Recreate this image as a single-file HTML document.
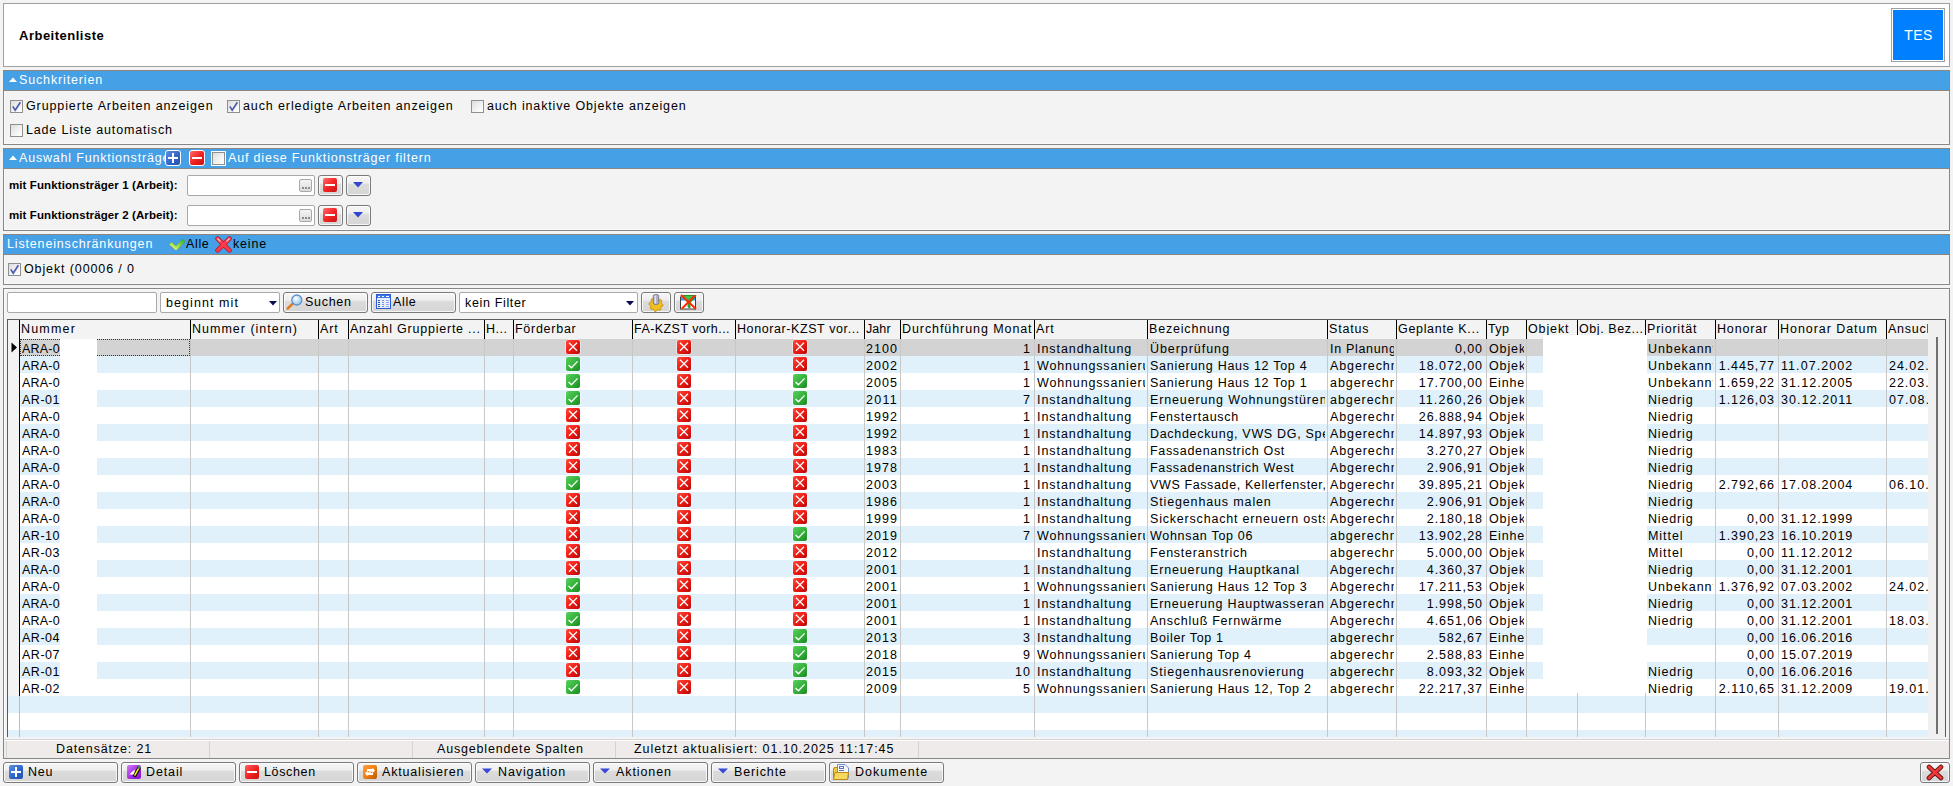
<!DOCTYPE html><html><head><meta charset="utf-8"><style>
*{box-sizing:border-box;margin:0;padding:0}
html,body{width:1953px;height:786px;overflow:hidden;background:#f3f3f3;font-family:"Liberation Sans",sans-serif;font-size:12.5px;letter-spacing:0.9px;color:#000}
.a{position:absolute}
.t{position:absolute;white-space:nowrap;line-height:17px}
.bar{position:absolute;left:3px;width:1947px;height:21px;background:#45a0e6;border-top:1px solid #8c8682;border-bottom:1px solid #8c8682;border-left:1px solid #8c8682;border-right:1px solid #8c8682}
.pnl{position:absolute;left:3px;width:1947px;border:1px solid #878787;border-top:none;box-shadow:inset 1px 0 #fafafa,inset 0 -1px #fafafa}
.bt{color:#fff}
.cb{position:absolute;width:13px;height:13px;border:1px solid #8e8f8f;background:linear-gradient(135deg,#dcdcdc 0%,#f4f4f4 60%,#fff 100%)}
.cb i{position:absolute;left:1px;top:1px;width:9px;height:9px;border:1px solid #fff;border-right:none;border-bottom:none}
.btn{position:absolute;border:1px solid #7a7a7a;border-radius:3px;background:linear-gradient(#f6f6f6 0%,#eeeeee 38%,#dcdcdc 43%,#d6d6d6 90%,#dedede 100%);box-shadow:inset 0 0 0 1px rgba(255,255,255,0.75)}
.inp{position:absolute;background:#fff;border:1px solid #a9a9a9;border-radius:2px}
.gh{position:absolute;top:320px;height:19px;background:#f3f3f3}
.hs{position:absolute;top:320px;width:1px;height:19px;background:#000}
.vs{position:absolute;width:1px;background:#c6c6c6}
.row{position:absolute;left:8px;width:1920px;height:17px}
.c{position:absolute;white-space:nowrap;overflow:hidden;line-height:17px;height:17px;padding-top:2px}
.r{text-align:right}
.ix{position:absolute;width:14px;height:14px;border-radius:2px}
</style></head><body>
<div class="a" style="left:3px;top:3px;width:1947px;height:64px;background:#fff;border:1px solid #a0a0a0"></div>
<div class="t fx" style="left:19px;top:27px;font-weight:bold;font-size:13px;letter-spacing:0.5px">Arbeitenliste</div>
<div class="a" style="left:1891px;top:8px;width:54px;height:54px;border:1px solid #a0a0a0;background:#fff"></div>
<div class="a" style="left:1893px;top:10px;width:50px;height:50px;background:#0080ff"></div>
<div class="t fx" style="left:1893px;top:27px;width:50px;text-align:center;color:#fff;font-size:14px;font-weight:normal;letter-spacing:0.4px;padding-left:1px">TES</div>
<div class="bar" style="top:70px"></div>
<svg class="a" style="left:9px;top:77px" width="8" height="5"><path d="M0 5 L4 0.5 L8 5 Z" fill="#fff"></path></svg>
<div class="t bt" style="left: 19px; top: 72px; letter-spacing: 0.86px;">Suchkriterien</div>
<div class="pnl" style="top:91px;height:54px"></div>
<div class="cb" style="left:10px;top:100px"><svg class="a" style="left:0;top:0" width="11" height="11"><path d="M1.8 5.4 L4.2 9.2 L9.4 1.2" stroke="#4a5cb0" stroke-width="1.7" fill="none"></path></svg></div>
<div class="t" style="left: 26px; top: 98px; letter-spacing: 0.89px;">Gruppierte Arbeiten anzeigen</div>
<div class="cb" style="left:227px;top:100px"><svg class="a" style="left:0;top:0" width="11" height="11"><path d="M1.8 5.4 L4.2 9.2 L9.4 1.2" stroke="#4a5cb0" stroke-width="1.7" fill="none"></path></svg></div>
<div class="t" style="left: 243px; top: 98px; letter-spacing: 0.89px;">auch erledigte Arbeiten anzeigen</div>
<div class="cb" style="left:471px;top:100px"></div>
<div class="t" style="left: 487px; top: 98px; letter-spacing: 0.86px;">auch inaktive Objekte anzeigen</div>
<div class="cb" style="left:10px;top:124px"></div>
<div class="t" style="left: 26px; top: 122px; letter-spacing: 0.83px;">Lade Liste automatisch</div>
<div class="bar" style="top:148px"></div>
<svg class="a" style="left:9px;top:155px" width="8" height="5"><path d="M0 5 L4 0.5 L8 5 Z" fill="#fff"></path></svg>
<div class="a" style="left:19px;top:149px;width:146px;height:19px;overflow:hidden"><div class="t bt" style="left: 0px; top: 1px; letter-spacing: 0.81px;">Auswahl Funktionsträger</div></div>
<div class="a" style="left:165px;top:150px;width:16px;height:16px;border:1px solid #fff;border-radius:3px;background:linear-gradient(135deg,#5b8fe0,#2f63c4 60%,#2553b0)"><div class="a" style="left:2px;top:6px;width:10px;height:2px;background:#fff"></div><div class="a" style="left:6px;top:2px;width:2px;height:10px;background:#fff"></div></div>
<div class="a" style="left:189px;top:150px;width:16px;height:16px;border:1px solid #fff;border-radius:3px;background:linear-gradient(135deg,#ff6a6a,#f02020 55%,#c81010)"><div class="a" style="left:2px;top:6px;width:10px;height:2px;background:#fff"></div></div>
<div class="a" style="left:211px;top:151px;width:15px;height:15px;border:1px solid #fff"><div class="cb" style="left:0;top:0"></div></div>
<div class="t bt" style="left: 228px; top: 150px; letter-spacing: 0.82px;">Auf diese Funktionsträger filtern</div>
<div class="pnl" style="top:169px;height:62px"></div>
<div class="t fx" style="left:9px;top:177px;font-size:11.5px;font-weight:bold;letter-spacing:0.1px">mit Funktionsträger 1 (Arbeit):</div>
<div class="inp" style="left:187px;top:175px;width:128px;height:21px"></div><div class="a" style="left:299px;top:179px;width:13px;height:13px;border:1px solid #a8a8a8;border-radius:2px;background:linear-gradient(#f4f4f4,#dcdcdc)"><div class="a" style="left:2px;top:7px;width:2px;height:2px;background:#8a8a8a"></div><div class="a" style="left:5px;top:7px;width:2px;height:2px;background:#8a8a8a"></div><div class="a" style="left:8px;top:7px;width:2px;height:2px;background:#8a8a8a"></div></div><div class="btn" style="left:318px;top:175px;width:25px;height:21px"><div class="a" style="left:4px;top:2px;width:14px;height:14px;border-radius:2px;background:linear-gradient(135deg,#ff7070,#f52525 50%,#c81414)"><div class="a" style="left:2px;top:6px;width:10px;height:2px;background:#fff"></div></div></div><div class="btn" style="left:346px;top:175px;width:25px;height:21px"><svg class="a" style="left:6px;top:6px" width="10" height="6"><path d="M0 0 L10 0 L5 5.5 Z" fill="#3344cc"></path></svg></div>
<div class="t fx" style="left:9px;top:207px;font-size:11.5px;font-weight:bold;letter-spacing:0.1px">mit Funktionsträger 2 (Arbeit):</div>
<div class="inp" style="left:187px;top:205px;width:128px;height:21px"></div><div class="a" style="left:299px;top:209px;width:13px;height:13px;border:1px solid #a8a8a8;border-radius:2px;background:linear-gradient(#f4f4f4,#dcdcdc)"><div class="a" style="left:2px;top:7px;width:2px;height:2px;background:#8a8a8a"></div><div class="a" style="left:5px;top:7px;width:2px;height:2px;background:#8a8a8a"></div><div class="a" style="left:8px;top:7px;width:2px;height:2px;background:#8a8a8a"></div></div><div class="btn" style="left:318px;top:205px;width:25px;height:21px"><div class="a" style="left:4px;top:2px;width:14px;height:14px;border-radius:2px;background:linear-gradient(135deg,#ff7070,#f52525 50%,#c81414)"><div class="a" style="left:2px;top:6px;width:10px;height:2px;background:#fff"></div></div></div><div class="btn" style="left:346px;top:205px;width:25px;height:21px"><svg class="a" style="left:6px;top:6px" width="10" height="6"><path d="M0 0 L10 0 L5 5.5 Z" fill="#3344cc"></path></svg></div>
<div class="bar" style="top:234px"></div>
<div class="t bt" style="left: 7px; top: 236px; letter-spacing: 0.84px;">Listeneinschränkungen</div>
<svg class="a" style="left:169px;top:238px" width="16" height="12"><defs><linearGradient id="lgc" x1="0" y1="1" x2="1" y2="0"><stop offset="0" stop-color="#e8f878"></stop><stop offset="0.5" stop-color="#88dc3c"></stop><stop offset="1" stop-color="#30b828"></stop></linearGradient></defs><path d="M1.2 5.2 L7 10.8 L15.2 2.2" stroke="#a04060" stroke-width="4.4" fill="none" stroke-linejoin="round" opacity="0.35"></path><path d="M1.4 5.2 L7 10.4 L15 2.2" stroke="url(#lgc)" stroke-width="3.4" fill="none" stroke-linejoin="miter"></path></svg>
<div class="t" style="left: 186px; top: 236px; letter-spacing: 0.64px;">Alle</div>
<svg class="a" style="left:215px;top:236px" width="17" height="17"><path d="M2.6 2.6 L14.4 14.4 M14.4 2.6 L2.6 14.4" stroke="#b01828" stroke-width="4.6" stroke-linecap="round"></path><path d="M2.6 2.6 L14.4 14.4 M14.4 2.6 L2.6 14.4" stroke="#ff3a48" stroke-width="3.2" stroke-linecap="round"></path><path d="M2.6 2.6 L5 5 M14.4 2.6 L12 5" stroke="#ffd0d8" stroke-width="1.2" stroke-linecap="round"></path></svg>
<div class="t" style="left: 233px; top: 236px; letter-spacing: 0.8px;">keine</div>
<div class="pnl" style="top:255px;height:30px"></div>
<div class="cb" style="left:8px;top:263px"><svg class="a" style="left:0;top:0" width="11" height="11"><path d="M1.8 5.4 L4.2 9.2 L9.4 1.2" stroke="#4a5cb0" stroke-width="1.7" fill="none"></path></svg></div>
<div class="t" style="left: 24px; top: 261px; letter-spacing: 0.88px;">Objekt (00006 / 0</div>
<div class="a" style="left:3px;top:288px;width:1947px;height:471px;border:1px solid #878787;box-shadow:inset 1px 1px #fafafa"></div>
<div class="inp" style="left:7px;top:292px;width:150px;height:21px"></div>
<div class="inp" style="left:160px;top:292px;width:120px;height:21px"></div>
<div class="t" style="left: 166px; top: 295px; letter-spacing: 1.08px;">beginnt mit</div>
<svg class="a" style="left:269px;top:301px" width="8" height="5"><path d="M0 0 L8 0 L4 4.5 Z" fill="#0a0a50"></path></svg>
<div class="btn" style="left:283px;top:292px;width:85px;height:21px"></div>
<svg class="a" style="left:285px;top:293px" width="18" height="18"><defs><radialGradient id="lg" cx="0.4" cy="0.35" r="0.7"><stop offset="0" stop-color="#ffffff"></stop><stop offset="1" stop-color="#8cc4ea"></stop></radialGradient></defs><line x1="2.6" y1="15.6" x2="8" y2="10.4" stroke="#e07818" stroke-width="2.4" stroke-linecap="round"></line><circle cx="11.8" cy="7" r="5" fill="url(#lg)" stroke="#5f93c8" stroke-width="1.3"></circle></svg>
<div class="t" style="left: 305px; top: 294px; letter-spacing: 0.72px;">Suchen</div>
<div class="btn" style="left:371px;top:292px;width:85px;height:21px"></div>
<svg class="a" style="left:376px;top:294px" width="15" height="15"><rect x="0.5" y="0.5" width="14" height="14" fill="#e8eeff" stroke="#2a5ad8"></rect><rect x="1" y="1" width="13" height="3" fill="#3d78e0"></rect><path d="M2 2.5 H4 M6 2.5 H8 M10 2.5 H13" stroke="#fff"></path><path d="M2 6.5 H4 M2 8.5 H4 M2 10.5 H4 M2 12.5 H4" stroke="#3050b0"></path><path d="M6 6.5 H8 M6 8.5 H8 M6 10.5 H8 M6 12.5 H8" stroke="#7090e0"></path><path d="M10 6.5 H13 M10 8.5 H13 M10 10.5 H13 M10 12.5 H13" stroke="#98a8f0"></path></svg>
<div class="t" style="left: 393px; top: 294px; letter-spacing: 0.64px;">Alle</div>
<div class="inp" style="left:459px;top:292px;width:179px;height:21px"></div>
<div class="t" style="left: 465px; top: 295px; letter-spacing: 0.66px;">kein Filter</div>
<svg class="a" style="left:626px;top:301px" width="8" height="5"><path d="M0 0 L8 0 L4 4.5 Z" fill="#0a0a50"></path></svg>
<div class="btn" style="left:641px;top:292px;width:30px;height:21px"></div>
<svg class="a" style="left:648px;top:294px" width="16" height="18"><path d="M15.00 10.50 L14.87 11.87 L13.17 12.64 L12.66 13.61 L12.95 15.45 L11.89 16.32 L10.14 15.67 L9.09 15.99 L8.00 17.50 L6.63 17.37 L5.86 15.67 L4.89 15.16 L3.05 15.45 L2.18 14.39 L2.83 12.64 L2.51 11.59 L1.00 10.50 L1.13 9.13 L2.83 8.36 L3.34 7.39 L3.05 5.55 L4.11 4.68 L5.86 5.33 L6.91 5.01 L8.00 3.50 L9.37 3.63 L10.14 5.33 L11.11 5.84 L12.95 5.55 L13.82 6.61 L13.17 8.36 L13.49 9.41 Z" fill="#f0c020" stroke="#c08800" stroke-width="0.8"></path><rect x="5.3" y="0.5" width="5.4" height="10" rx="2" fill="#b0b0c8" stroke="#7c7c90"></rect><rect x="6.5" y="1.5" width="1.5" height="8" fill="#e0e0f0"></rect></svg>
<div class="btn" style="left:674px;top:292px;width:30px;height:21px"></div>
<svg class="a" style="left:680px;top:294px" width="17" height="16"><rect x="0.5" y="3" width="15" height="12" fill="#fff" stroke="#404040"></rect><rect x="1" y="3.5" width="14" height="3" fill="#30a0f0"></rect><path d="M3 1.5 H16 L10 9 V14 L8 13 V9 Z" fill="#40c040" stroke="#108010" stroke-width="0.8"></path><path d="M1 1 L16 15 M15 1.5 L2 14.5" stroke="#ff2a00" stroke-width="2"></path></svg>
<div class="a" style="left:7px;top:319px;width:1939px;height:418px;border:1px solid #7a7a7a;border-bottom:none;background:#fff;overflow:hidden">
</div>
<div class="a" style="left:8px;top:320px;width:1920px;height:19px;background:#f3f3f3"></div>
<div class="a" style="left:8px;top:339px;width:1920px;height:17px;background:#d3d3d3"></div>
<div class="a" style="left:8px;top:356px;width:1920px;height:17px;background:#e0f1fb"></div>
<div class="a" style="left:8px;top:373px;width:1920px;height:17px;background:#ffffff"></div>
<div class="a" style="left:8px;top:390px;width:1920px;height:17px;background:#e0f1fb"></div>
<div class="a" style="left:8px;top:407px;width:1920px;height:17px;background:#ffffff"></div>
<div class="a" style="left:8px;top:424px;width:1920px;height:17px;background:#e0f1fb"></div>
<div class="a" style="left:8px;top:441px;width:1920px;height:17px;background:#ffffff"></div>
<div class="a" style="left:8px;top:458px;width:1920px;height:17px;background:#e0f1fb"></div>
<div class="a" style="left:8px;top:475px;width:1920px;height:17px;background:#ffffff"></div>
<div class="a" style="left:8px;top:492px;width:1920px;height:17px;background:#e0f1fb"></div>
<div class="a" style="left:8px;top:509px;width:1920px;height:17px;background:#ffffff"></div>
<div class="a" style="left:8px;top:526px;width:1920px;height:17px;background:#e0f1fb"></div>
<div class="a" style="left:8px;top:543px;width:1920px;height:17px;background:#ffffff"></div>
<div class="a" style="left:8px;top:560px;width:1920px;height:17px;background:#e0f1fb"></div>
<div class="a" style="left:8px;top:577px;width:1920px;height:17px;background:#ffffff"></div>
<div class="a" style="left:8px;top:594px;width:1920px;height:17px;background:#e0f1fb"></div>
<div class="a" style="left:8px;top:611px;width:1920px;height:17px;background:#ffffff"></div>
<div class="a" style="left:8px;top:628px;width:1920px;height:17px;background:#e0f1fb"></div>
<div class="a" style="left:8px;top:645px;width:1920px;height:17px;background:#ffffff"></div>
<div class="a" style="left:8px;top:662px;width:1920px;height:17px;background:#e0f1fb"></div>
<div class="a" style="left:8px;top:679px;width:1920px;height:17px;background:#ffffff"></div>
<div class="a" style="left:8px;top:696px;width:1920px;height:17px;background:#e0f1fb"></div>
<div class="a" style="left:8px;top:713px;width:1920px;height:17px;background:#ffffff"></div>
<div class="a" style="left:8px;top:730px;width:1920px;height:7px;background:#e0f1fb"></div>
<div class="a" style="left:8px;top:320px;width:11px;height:376px;background:#f3f3f3"></div>
<div class="a" style="left:19px;top:320px;width:1px;height:376px;background:#000"></div>
<div class="a" style="left:19px;top:696px;width:1px;height:41px;background:#bcbcbc"></div>
<div class="a" style="left:190px;top:339px;width:1px;height:398px;background:#c8c8c8"></div>
<div class="a" style="left:190px;top:320px;width:1px;height:19px;background:#000"></div>
<div class="a" style="left:318px;top:339px;width:1px;height:398px;background:#c8c8c8"></div>
<div class="a" style="left:318px;top:320px;width:1px;height:19px;background:#000"></div>
<div class="a" style="left:348px;top:339px;width:1px;height:398px;background:#c8c8c8"></div>
<div class="a" style="left:348px;top:320px;width:1px;height:19px;background:#000"></div>
<div class="a" style="left:484px;top:339px;width:1px;height:398px;background:#c8c8c8"></div>
<div class="a" style="left:484px;top:320px;width:1px;height:19px;background:#000"></div>
<div class="a" style="left:513px;top:339px;width:1px;height:398px;background:#c8c8c8"></div>
<div class="a" style="left:513px;top:320px;width:1px;height:19px;background:#000"></div>
<div class="a" style="left:632px;top:339px;width:1px;height:398px;background:#c8c8c8"></div>
<div class="a" style="left:632px;top:320px;width:1px;height:19px;background:#000"></div>
<div class="a" style="left:735px;top:339px;width:1px;height:398px;background:#c8c8c8"></div>
<div class="a" style="left:735px;top:320px;width:1px;height:19px;background:#000"></div>
<div class="a" style="left:864px;top:339px;width:1px;height:398px;background:#c8c8c8"></div>
<div class="a" style="left:864px;top:320px;width:1px;height:19px;background:#000"></div>
<div class="a" style="left:900px;top:339px;width:1px;height:398px;background:#c8c8c8"></div>
<div class="a" style="left:900px;top:320px;width:1px;height:19px;background:#000"></div>
<div class="a" style="left:1034px;top:339px;width:1px;height:398px;background:#c8c8c8"></div>
<div class="a" style="left:1034px;top:320px;width:1px;height:19px;background:#000"></div>
<div class="a" style="left:1147px;top:339px;width:1px;height:398px;background:#c8c8c8"></div>
<div class="a" style="left:1147px;top:320px;width:1px;height:19px;background:#000"></div>
<div class="a" style="left:1327px;top:339px;width:1px;height:398px;background:#c8c8c8"></div>
<div class="a" style="left:1327px;top:320px;width:1px;height:19px;background:#000"></div>
<div class="a" style="left:1396px;top:339px;width:1px;height:398px;background:#c8c8c8"></div>
<div class="a" style="left:1396px;top:320px;width:1px;height:19px;background:#000"></div>
<div class="a" style="left:1486px;top:339px;width:1px;height:398px;background:#c8c8c8"></div>
<div class="a" style="left:1486px;top:320px;width:1px;height:19px;background:#000"></div>
<div class="a" style="left:1526px;top:339px;width:1px;height:398px;background:#c8c8c8"></div>
<div class="a" style="left:1526px;top:320px;width:1px;height:19px;background:#000"></div>
<div class="a" style="left:1577px;top:339px;width:1px;height:398px;background:#c8c8c8"></div>
<div class="a" style="left:1577px;top:320px;width:1px;height:19px;background:#000"></div>
<div class="a" style="left:1645px;top:339px;width:1px;height:398px;background:#c8c8c8"></div>
<div class="a" style="left:1645px;top:320px;width:1px;height:19px;background:#000"></div>
<div class="a" style="left:1715px;top:339px;width:1px;height:398px;background:#c8c8c8"></div>
<div class="a" style="left:1715px;top:320px;width:1px;height:19px;background:#000"></div>
<div class="a" style="left:1778px;top:339px;width:1px;height:398px;background:#c8c8c8"></div>
<div class="a" style="left:1778px;top:320px;width:1px;height:19px;background:#000"></div>
<div class="a" style="left:1886px;top:339px;width:1px;height:398px;background:#c8c8c8"></div>
<div class="a" style="left:1886px;top:320px;width:1px;height:19px;background:#000"></div>
<div class="c" style="left: 21px; top: 319px; width: 169px; line-height: 17px; letter-spacing: 1.18px;">Nummer</div>
<div class="c" style="left: 192px; top: 319px; width: 126px; line-height: 17px; letter-spacing: 1px;">Nummer (intern)</div>
<div class="c" style="left: 320px; top: 319px; width: 28px; line-height: 17px; letter-spacing: 0.93px;">Art</div>
<div class="c" style="left: 350px; top: 319px; width: 134px; line-height: 17px; letter-spacing: 0.77px;">Anzahl Gruppierte ...</div>
<div class="c" style="left: 486px; top: 319px; width: 27px; line-height: 17px; letter-spacing: 0.47px;">H...</div>
<div class="c" style="left: 515px; top: 319px; width: 117px; line-height: 17px; letter-spacing: 0.73px;">Förderbar</div>
<div class="c" style="left: 634px; top: 319px; width: 101px; line-height: 17px; letter-spacing: 0.44px;">FA-KZST vorh...</div>
<div class="c" style="left: 737px; top: 319px; width: 127px; line-height: 17px; letter-spacing: 0.59px;">Honorar-KZST vor...</div>
<div class="c" style="left: 866px; top: 319px; width: 34px; line-height: 17px; letter-spacing: 0.08px;">Jahr</div>
<div class="c" style="left: 902px; top: 319px; width: 132px; line-height: 17px; letter-spacing: 0.92px;">Durchführung Monat</div>
<div class="c" style="left: 1036px; top: 319px; width: 111px; line-height: 17px; letter-spacing: 0.93px;">Art</div>
<div class="c" style="left: 1149px; top: 319px; width: 178px; line-height: 17px; letter-spacing: 0.82px;">Bezeichnung</div>
<div class="c" style="left: 1329px; top: 319px; width: 67px; line-height: 17px; letter-spacing: 0.8px;">Status</div>
<div class="c" style="left: 1398px; top: 319px; width: 88px; line-height: 17px; letter-spacing: 0.68px;">Geplante K...</div>
<div class="c" style="left: 1488px; top: 319px; width: 38px; line-height: 17px; letter-spacing: 0.36px;">Typ</div>
<div class="c" style="left: 1528px; top: 319px; width: 49px; line-height: 17px; letter-spacing: 0.89px;">Objekt</div>
<div class="c" style="left: 1579px; top: 319px; width: 66px; line-height: 17px; letter-spacing: 0.57px;">Obj. Bez...</div>
<div class="c" style="left: 1647px; top: 319px; width: 68px; line-height: 17px; letter-spacing: 0.79px;">Priorität</div>
<div class="c" style="left: 1717px; top: 319px; width: 61px; line-height: 17px; letter-spacing: 0.84px;">Honorar</div>
<div class="c" style="left: 1780px; top: 319px; width: 106px; line-height: 17px; letter-spacing: 0.95px;">Honorar Datum</div>
<div class="c" style="left: 1888px; top: 319px; width: 40px; line-height: 17px; letter-spacing: 0.74px;">Ansuch</div>
<svg class="a" style="left:0;top:0" width="0" height="0"><defs><linearGradient id="gr" x1="0" y1="0" x2="1" y2="1"><stop offset="0" stop-color="#ff4a3a"></stop><stop offset="0.5" stop-color="#ee1c14"></stop><stop offset="1" stop-color="#b80808"></stop></linearGradient><linearGradient id="gg" x1="0" y1="0" x2="1" y2="1"><stop offset="0" stop-color="#5ad060"></stop><stop offset="0.5" stop-color="#36b43c"></stop><stop offset="1" stop-color="#1a8a22"></stop></linearGradient></defs></svg>
<div class="c" style="left: 22px; top: 339px; width: 168px; letter-spacing: 0.21px;">ARA-0</div>
<svg class="a" style="left:565px;top:339px" width="16" height="16"><rect x="0.5" y="0.5" width="15" height="15" rx="3" fill="#fff" opacity="0.85"></rect><rect x="1" y="1" width="14" height="14" rx="2" fill="url(#gr)"></rect><path d="M4 3.8 L12 11.8 M12 3.8 L4 11.8" stroke="#fff" stroke-width="1.25"></path></svg>
<svg class="a" style="left:676px;top:339px" width="16" height="16"><rect x="0.5" y="0.5" width="15" height="15" rx="3" fill="#fff" opacity="0.85"></rect><rect x="1" y="1" width="14" height="14" rx="2" fill="url(#gr)"></rect><path d="M4 3.8 L12 11.8 M12 3.8 L4 11.8" stroke="#fff" stroke-width="1.25"></path></svg>
<svg class="a" style="left:792px;top:339px" width="16" height="16"><rect x="0.5" y="0.5" width="15" height="15" rx="3" fill="#fff" opacity="0.85"></rect><rect x="1" y="1" width="14" height="14" rx="2" fill="url(#gr)"></rect><path d="M4 3.8 L12 11.8 M12 3.8 L4 11.8" stroke="#fff" stroke-width="1.25"></path></svg>
<div class="c" style="left: 866px; top: 339px; width: 34px; letter-spacing: 1.08px;">2100</div>
<div class="c r" style="left: 901px; top: 339px; width: 130px; letter-spacing: 1.08px;">1</div>
<div class="c" style="left: 1037px; top: 339px; width: 108px; letter-spacing: 0.94px;">Instandhaltung</div>
<div class="c" style="left: 1150px; top: 339px; width: 175px; letter-spacing: 0.94px;">Überprüfung</div>
<div class="c" style="left: 1330px; top: 339px; width: 64px; letter-spacing: 0.68px;">In Planung</div>
<div class="c r" style="left: 1397px; top: 339px; width: 86px; letter-spacing: 0.94px;">0,00</div>
<div class="c" style="left: 1489px; top: 339px; width: 35px; letter-spacing: 0.89px;">Objekt</div>
<div class="c" style="left: 1648px; top: 339px; width: 65px; letter-spacing: 0.93px;">Unbekannt</div>
<div class="c" style="left: 22px; top: 356px; width: 168px; letter-spacing: 0.21px;">ARA-0</div>
<svg class="a" style="left:565px;top:356px" width="16" height="16"><rect x="0.5" y="0.5" width="15" height="15" rx="3" fill="#fff" opacity="0.85"></rect><rect x="1" y="1" width="14" height="14" rx="2" fill="url(#gg)"></rect><path d="M3.6 9 L6.4 11.8 L12.6 5.4" stroke="#fff" stroke-width="1.3" fill="none"></path></svg>
<svg class="a" style="left:676px;top:356px" width="16" height="16"><rect x="0.5" y="0.5" width="15" height="15" rx="3" fill="#fff" opacity="0.85"></rect><rect x="1" y="1" width="14" height="14" rx="2" fill="url(#gr)"></rect><path d="M4 3.8 L12 11.8 M12 3.8 L4 11.8" stroke="#fff" stroke-width="1.25"></path></svg>
<svg class="a" style="left:792px;top:356px" width="16" height="16"><rect x="0.5" y="0.5" width="15" height="15" rx="3" fill="#fff" opacity="0.85"></rect><rect x="1" y="1" width="14" height="14" rx="2" fill="url(#gr)"></rect><path d="M4 3.8 L12 11.8 M12 3.8 L4 11.8" stroke="#fff" stroke-width="1.25"></path></svg>
<div class="c" style="left: 866px; top: 356px; width: 34px; letter-spacing: 1.08px;">2002</div>
<div class="c r" style="left: 901px; top: 356px; width: 130px; letter-spacing: 1.08px;">1</div>
<div class="c" style="left: 1037px; top: 356px; width: 108px; letter-spacing: 0.85px;">Wohnungssanierung</div>
<div class="c" style="left: 1150px; top: 356px; width: 175px; letter-spacing: 0.72px;">Sanierung Haus 12 Top 4</div>
<div class="c" style="left: 1330px; top: 356px; width: 64px; letter-spacing: 0.9px;">Abgerechnet</div>
<div class="c r" style="left: 1397px; top: 356px; width: 86px; letter-spacing: 0.96px;">18.072,00</div>
<div class="c" style="left: 1489px; top: 356px; width: 35px; letter-spacing: 0.89px;">Objekt</div>
<div class="c" style="left: 1648px; top: 356px; width: 65px; letter-spacing: 0.93px;">Unbekannt</div>
<div class="c r" style="left: 1716px; top: 356px; width: 59px; letter-spacing: 0.94px;">1.445,77</div>
<div class="c" style="left: 1781px; top: 356px; width: 105px; letter-spacing: 1.07px;">11.07.2002</div>
<div class="c" style="left: 1889px; top: 356px; width: 39px; letter-spacing: 0.97px;">24.02.2002</div>
<div class="c" style="left: 22px; top: 373px; width: 168px; letter-spacing: 0.21px;">ARA-0</div>
<svg class="a" style="left:565px;top:373px" width="16" height="16"><rect x="0.5" y="0.5" width="15" height="15" rx="3" fill="#fff" opacity="0.85"></rect><rect x="1" y="1" width="14" height="14" rx="2" fill="url(#gg)"></rect><path d="M3.6 9 L6.4 11.8 L12.6 5.4" stroke="#fff" stroke-width="1.3" fill="none"></path></svg>
<svg class="a" style="left:676px;top:373px" width="16" height="16"><rect x="0.5" y="0.5" width="15" height="15" rx="3" fill="#fff" opacity="0.85"></rect><rect x="1" y="1" width="14" height="14" rx="2" fill="url(#gr)"></rect><path d="M4 3.8 L12 11.8 M12 3.8 L4 11.8" stroke="#fff" stroke-width="1.25"></path></svg>
<svg class="a" style="left:792px;top:373px" width="16" height="16"><rect x="0.5" y="0.5" width="15" height="15" rx="3" fill="#fff" opacity="0.85"></rect><rect x="1" y="1" width="14" height="14" rx="2" fill="url(#gg)"></rect><path d="M3.6 9 L6.4 11.8 L12.6 5.4" stroke="#fff" stroke-width="1.3" fill="none"></path></svg>
<div class="c" style="left: 866px; top: 373px; width: 34px; letter-spacing: 1.08px;">2005</div>
<div class="c r" style="left: 901px; top: 373px; width: 130px; letter-spacing: 1.08px;">1</div>
<div class="c" style="left: 1037px; top: 373px; width: 108px; letter-spacing: 0.85px;">Wohnungssanierung</div>
<div class="c" style="left: 1150px; top: 373px; width: 175px; letter-spacing: 0.72px;">Sanierung Haus 12 Top 1</div>
<div class="c" style="left: 1330px; top: 373px; width: 64px; letter-spacing: 0.94px;">abgerechnet</div>
<div class="c r" style="left: 1397px; top: 373px; width: 86px; letter-spacing: 0.96px;">17.700,00</div>
<div class="c" style="left: 1489px; top: 373px; width: 35px; letter-spacing: 0.78px;">Einheit</div>
<div class="c" style="left: 1648px; top: 373px; width: 65px; letter-spacing: 0.93px;">Unbekannt</div>
<div class="c r" style="left: 1716px; top: 373px; width: 59px; letter-spacing: 0.94px;">1.659,22</div>
<div class="c" style="left: 1781px; top: 373px; width: 105px; letter-spacing: 0.97px;">31.12.2005</div>
<div class="c" style="left: 1889px; top: 373px; width: 39px; letter-spacing: 0.97px;">22.03.2005</div>
<div class="c" style="left: 22px; top: 390px; width: 168px; letter-spacing: 0.53px;">AR-019</div>
<svg class="a" style="left:565px;top:390px" width="16" height="16"><rect x="0.5" y="0.5" width="15" height="15" rx="3" fill="#fff" opacity="0.85"></rect><rect x="1" y="1" width="14" height="14" rx="2" fill="url(#gg)"></rect><path d="M3.6 9 L6.4 11.8 L12.6 5.4" stroke="#fff" stroke-width="1.3" fill="none"></path></svg>
<svg class="a" style="left:676px;top:390px" width="16" height="16"><rect x="0.5" y="0.5" width="15" height="15" rx="3" fill="#fff" opacity="0.85"></rect><rect x="1" y="1" width="14" height="14" rx="2" fill="url(#gr)"></rect><path d="M4 3.8 L12 11.8 M12 3.8 L4 11.8" stroke="#fff" stroke-width="1.25"></path></svg>
<svg class="a" style="left:792px;top:390px" width="16" height="16"><rect x="0.5" y="0.5" width="15" height="15" rx="3" fill="#fff" opacity="0.85"></rect><rect x="1" y="1" width="14" height="14" rx="2" fill="url(#gg)"></rect><path d="M3.6 9 L6.4 11.8 L12.6 5.4" stroke="#fff" stroke-width="1.3" fill="none"></path></svg>
<div class="c" style="left: 866px; top: 390px; width: 34px; letter-spacing: 1.31px;">2011</div>
<div class="c r" style="left: 901px; top: 390px; width: 130px; letter-spacing: 1.08px;">7</div>
<div class="c" style="left: 1037px; top: 390px; width: 108px; letter-spacing: 0.94px;">Instandhaltung</div>
<div class="c" style="left: 1150px; top: 390px; width: 175px; letter-spacing: 0.86px;">Erneuerung Wohnungstüren</div>
<div class="c" style="left: 1330px; top: 390px; width: 64px; letter-spacing: 0.94px;">abgerechnet</div>
<div class="c r" style="left: 1397px; top: 390px; width: 86px; letter-spacing: 1.06px;">11.260,26</div>
<div class="c" style="left: 1489px; top: 390px; width: 35px; letter-spacing: 0.89px;">Objekt</div>
<div class="c" style="left: 1648px; top: 390px; width: 65px; letter-spacing: 0.83px;">Niedrig</div>
<div class="c r" style="left: 1716px; top: 390px; width: 59px; letter-spacing: 0.94px;">1.126,03</div>
<div class="c" style="left: 1781px; top: 390px; width: 105px; letter-spacing: 1.07px;">30.12.2011</div>
<div class="c" style="left: 1889px; top: 390px; width: 39px; letter-spacing: 1.07px;">07.08.2011</div>
<div class="c" style="left: 22px; top: 407px; width: 168px; letter-spacing: 0.21px;">ARA-0</div>
<svg class="a" style="left:565px;top:407px" width="16" height="16"><rect x="0.5" y="0.5" width="15" height="15" rx="3" fill="#fff" opacity="0.85"></rect><rect x="1" y="1" width="14" height="14" rx="2" fill="url(#gr)"></rect><path d="M4 3.8 L12 11.8 M12 3.8 L4 11.8" stroke="#fff" stroke-width="1.25"></path></svg>
<svg class="a" style="left:676px;top:407px" width="16" height="16"><rect x="0.5" y="0.5" width="15" height="15" rx="3" fill="#fff" opacity="0.85"></rect><rect x="1" y="1" width="14" height="14" rx="2" fill="url(#gr)"></rect><path d="M4 3.8 L12 11.8 M12 3.8 L4 11.8" stroke="#fff" stroke-width="1.25"></path></svg>
<svg class="a" style="left:792px;top:407px" width="16" height="16"><rect x="0.5" y="0.5" width="15" height="15" rx="3" fill="#fff" opacity="0.85"></rect><rect x="1" y="1" width="14" height="14" rx="2" fill="url(#gr)"></rect><path d="M4 3.8 L12 11.8 M12 3.8 L4 11.8" stroke="#fff" stroke-width="1.25"></path></svg>
<div class="c" style="left: 866px; top: 407px; width: 34px; letter-spacing: 1.08px;">1992</div>
<div class="c r" style="left: 901px; top: 407px; width: 130px; letter-spacing: 1.08px;">1</div>
<div class="c" style="left: 1037px; top: 407px; width: 108px; letter-spacing: 0.94px;">Instandhaltung</div>
<div class="c" style="left: 1150px; top: 407px; width: 175px; letter-spacing: 0.76px;">Fenstertausch</div>
<div class="c" style="left: 1330px; top: 407px; width: 64px; letter-spacing: 0.9px;">Abgerechnet</div>
<div class="c r" style="left: 1397px; top: 407px; width: 86px; letter-spacing: 0.96px;">26.888,94</div>
<div class="c" style="left: 1489px; top: 407px; width: 35px; letter-spacing: 0.89px;">Objekt</div>
<div class="c" style="left: 1648px; top: 407px; width: 65px; letter-spacing: 0.83px;">Niedrig</div>
<div class="c" style="left: 22px; top: 424px; width: 168px; letter-spacing: 0.21px;">ARA-0</div>
<svg class="a" style="left:565px;top:424px" width="16" height="16"><rect x="0.5" y="0.5" width="15" height="15" rx="3" fill="#fff" opacity="0.85"></rect><rect x="1" y="1" width="14" height="14" rx="2" fill="url(#gr)"></rect><path d="M4 3.8 L12 11.8 M12 3.8 L4 11.8" stroke="#fff" stroke-width="1.25"></path></svg>
<svg class="a" style="left:676px;top:424px" width="16" height="16"><rect x="0.5" y="0.5" width="15" height="15" rx="3" fill="#fff" opacity="0.85"></rect><rect x="1" y="1" width="14" height="14" rx="2" fill="url(#gr)"></rect><path d="M4 3.8 L12 11.8 M12 3.8 L4 11.8" stroke="#fff" stroke-width="1.25"></path></svg>
<svg class="a" style="left:792px;top:424px" width="16" height="16"><rect x="0.5" y="0.5" width="15" height="15" rx="3" fill="#fff" opacity="0.85"></rect><rect x="1" y="1" width="14" height="14" rx="2" fill="url(#gr)"></rect><path d="M4 3.8 L12 11.8 M12 3.8 L4 11.8" stroke="#fff" stroke-width="1.25"></path></svg>
<div class="c" style="left: 866px; top: 424px; width: 34px; letter-spacing: 1.08px;">1992</div>
<div class="c r" style="left: 901px; top: 424px; width: 130px; letter-spacing: 1.08px;">1</div>
<div class="c" style="left: 1037px; top: 424px; width: 108px; letter-spacing: 0.94px;">Instandhaltung</div>
<div class="c" style="left: 1150px; top: 424px; width: 175px; letter-spacing: 0.69px;">Dachdeckung, VWS DG, Spengler</div>
<div class="c" style="left: 1330px; top: 424px; width: 64px; letter-spacing: 0.9px;">Abgerechnet</div>
<div class="c r" style="left: 1397px; top: 424px; width: 86px; letter-spacing: 0.96px;">14.897,93</div>
<div class="c" style="left: 1489px; top: 424px; width: 35px; letter-spacing: 0.89px;">Objekt</div>
<div class="c" style="left: 1648px; top: 424px; width: 65px; letter-spacing: 0.83px;">Niedrig</div>
<div class="c" style="left: 22px; top: 441px; width: 168px; letter-spacing: 0.21px;">ARA-0</div>
<svg class="a" style="left:565px;top:441px" width="16" height="16"><rect x="0.5" y="0.5" width="15" height="15" rx="3" fill="#fff" opacity="0.85"></rect><rect x="1" y="1" width="14" height="14" rx="2" fill="url(#gr)"></rect><path d="M4 3.8 L12 11.8 M12 3.8 L4 11.8" stroke="#fff" stroke-width="1.25"></path></svg>
<svg class="a" style="left:676px;top:441px" width="16" height="16"><rect x="0.5" y="0.5" width="15" height="15" rx="3" fill="#fff" opacity="0.85"></rect><rect x="1" y="1" width="14" height="14" rx="2" fill="url(#gr)"></rect><path d="M4 3.8 L12 11.8 M12 3.8 L4 11.8" stroke="#fff" stroke-width="1.25"></path></svg>
<svg class="a" style="left:792px;top:441px" width="16" height="16"><rect x="0.5" y="0.5" width="15" height="15" rx="3" fill="#fff" opacity="0.85"></rect><rect x="1" y="1" width="14" height="14" rx="2" fill="url(#gr)"></rect><path d="M4 3.8 L12 11.8 M12 3.8 L4 11.8" stroke="#fff" stroke-width="1.25"></path></svg>
<div class="c" style="left: 866px; top: 441px; width: 34px; letter-spacing: 1.08px;">1983</div>
<div class="c r" style="left: 901px; top: 441px; width: 130px; letter-spacing: 1.08px;">1</div>
<div class="c" style="left: 1037px; top: 441px; width: 108px; letter-spacing: 0.94px;">Instandhaltung</div>
<div class="c" style="left: 1150px; top: 441px; width: 175px; letter-spacing: 0.67px;">Fassadenanstrich Ost</div>
<div class="c" style="left: 1330px; top: 441px; width: 64px; letter-spacing: 0.9px;">Abgerechnet</div>
<div class="c r" style="left: 1397px; top: 441px; width: 86px; letter-spacing: 0.94px;">3.270,27</div>
<div class="c" style="left: 1489px; top: 441px; width: 35px; letter-spacing: 0.89px;">Objekt</div>
<div class="c" style="left: 1648px; top: 441px; width: 65px; letter-spacing: 0.83px;">Niedrig</div>
<div class="c" style="left: 22px; top: 458px; width: 168px; letter-spacing: 0.21px;">ARA-0</div>
<svg class="a" style="left:565px;top:458px" width="16" height="16"><rect x="0.5" y="0.5" width="15" height="15" rx="3" fill="#fff" opacity="0.85"></rect><rect x="1" y="1" width="14" height="14" rx="2" fill="url(#gr)"></rect><path d="M4 3.8 L12 11.8 M12 3.8 L4 11.8" stroke="#fff" stroke-width="1.25"></path></svg>
<svg class="a" style="left:676px;top:458px" width="16" height="16"><rect x="0.5" y="0.5" width="15" height="15" rx="3" fill="#fff" opacity="0.85"></rect><rect x="1" y="1" width="14" height="14" rx="2" fill="url(#gr)"></rect><path d="M4 3.8 L12 11.8 M12 3.8 L4 11.8" stroke="#fff" stroke-width="1.25"></path></svg>
<svg class="a" style="left:792px;top:458px" width="16" height="16"><rect x="0.5" y="0.5" width="15" height="15" rx="3" fill="#fff" opacity="0.85"></rect><rect x="1" y="1" width="14" height="14" rx="2" fill="url(#gr)"></rect><path d="M4 3.8 L12 11.8 M12 3.8 L4 11.8" stroke="#fff" stroke-width="1.25"></path></svg>
<div class="c" style="left: 866px; top: 458px; width: 34px; letter-spacing: 1.08px;">1978</div>
<div class="c r" style="left: 901px; top: 458px; width: 130px; letter-spacing: 1.08px;">1</div>
<div class="c" style="left: 1037px; top: 458px; width: 108px; letter-spacing: 0.94px;">Instandhaltung</div>
<div class="c" style="left: 1150px; top: 458px; width: 175px; letter-spacing: 0.67px;">Fassadenanstrich West</div>
<div class="c" style="left: 1330px; top: 458px; width: 64px; letter-spacing: 0.9px;">Abgerechnet</div>
<div class="c r" style="left: 1397px; top: 458px; width: 86px; letter-spacing: 0.94px;">2.906,91</div>
<div class="c" style="left: 1489px; top: 458px; width: 35px; letter-spacing: 0.89px;">Objekt</div>
<div class="c" style="left: 1648px; top: 458px; width: 65px; letter-spacing: 0.83px;">Niedrig</div>
<div class="c" style="left: 22px; top: 475px; width: 168px; letter-spacing: 0.21px;">ARA-0</div>
<svg class="a" style="left:565px;top:475px" width="16" height="16"><rect x="0.5" y="0.5" width="15" height="15" rx="3" fill="#fff" opacity="0.85"></rect><rect x="1" y="1" width="14" height="14" rx="2" fill="url(#gg)"></rect><path d="M3.6 9 L6.4 11.8 L12.6 5.4" stroke="#fff" stroke-width="1.3" fill="none"></path></svg>
<svg class="a" style="left:676px;top:475px" width="16" height="16"><rect x="0.5" y="0.5" width="15" height="15" rx="3" fill="#fff" opacity="0.85"></rect><rect x="1" y="1" width="14" height="14" rx="2" fill="url(#gr)"></rect><path d="M4 3.8 L12 11.8 M12 3.8 L4 11.8" stroke="#fff" stroke-width="1.25"></path></svg>
<svg class="a" style="left:792px;top:475px" width="16" height="16"><rect x="0.5" y="0.5" width="15" height="15" rx="3" fill="#fff" opacity="0.85"></rect><rect x="1" y="1" width="14" height="14" rx="2" fill="url(#gr)"></rect><path d="M4 3.8 L12 11.8 M12 3.8 L4 11.8" stroke="#fff" stroke-width="1.25"></path></svg>
<div class="c" style="left: 866px; top: 475px; width: 34px; letter-spacing: 1.08px;">2003</div>
<div class="c r" style="left: 901px; top: 475px; width: 130px; letter-spacing: 1.08px;">1</div>
<div class="c" style="left: 1037px; top: 475px; width: 108px; letter-spacing: 0.94px;">Instandhaltung</div>
<div class="c" style="left: 1150px; top: 475px; width: 175px; letter-spacing: 0.62px;">VWS Fassade, Kellerfenster, Dach</div>
<div class="c" style="left: 1330px; top: 475px; width: 64px; letter-spacing: 0.9px;">Abgerechnet</div>
<div class="c r" style="left: 1397px; top: 475px; width: 86px; letter-spacing: 0.96px;">39.895,21</div>
<div class="c" style="left: 1489px; top: 475px; width: 35px; letter-spacing: 0.89px;">Objekt</div>
<div class="c" style="left: 1648px; top: 475px; width: 65px; letter-spacing: 0.83px;">Niedrig</div>
<div class="c r" style="left: 1716px; top: 475px; width: 59px; letter-spacing: 0.94px;">2.792,66</div>
<div class="c" style="left: 1781px; top: 475px; width: 105px; letter-spacing: 0.97px;">17.08.2004</div>
<div class="c" style="left: 1889px; top: 475px; width: 39px; letter-spacing: 0.97px;">06.10.2003</div>
<div class="c" style="left: 22px; top: 492px; width: 168px; letter-spacing: 0.21px;">ARA-0</div>
<svg class="a" style="left:565px;top:492px" width="16" height="16"><rect x="0.5" y="0.5" width="15" height="15" rx="3" fill="#fff" opacity="0.85"></rect><rect x="1" y="1" width="14" height="14" rx="2" fill="url(#gr)"></rect><path d="M4 3.8 L12 11.8 M12 3.8 L4 11.8" stroke="#fff" stroke-width="1.25"></path></svg>
<svg class="a" style="left:676px;top:492px" width="16" height="16"><rect x="0.5" y="0.5" width="15" height="15" rx="3" fill="#fff" opacity="0.85"></rect><rect x="1" y="1" width="14" height="14" rx="2" fill="url(#gr)"></rect><path d="M4 3.8 L12 11.8 M12 3.8 L4 11.8" stroke="#fff" stroke-width="1.25"></path></svg>
<svg class="a" style="left:792px;top:492px" width="16" height="16"><rect x="0.5" y="0.5" width="15" height="15" rx="3" fill="#fff" opacity="0.85"></rect><rect x="1" y="1" width="14" height="14" rx="2" fill="url(#gr)"></rect><path d="M4 3.8 L12 11.8 M12 3.8 L4 11.8" stroke="#fff" stroke-width="1.25"></path></svg>
<div class="c" style="left: 866px; top: 492px; width: 34px; letter-spacing: 1.08px;">1986</div>
<div class="c r" style="left: 901px; top: 492px; width: 130px; letter-spacing: 1.08px;">1</div>
<div class="c" style="left: 1037px; top: 492px; width: 108px; letter-spacing: 0.94px;">Instandhaltung</div>
<div class="c" style="left: 1150px; top: 492px; width: 175px; letter-spacing: 0.86px;">Stiegenhaus malen</div>
<div class="c" style="left: 1330px; top: 492px; width: 64px; letter-spacing: 0.9px;">Abgerechnet</div>
<div class="c r" style="left: 1397px; top: 492px; width: 86px; letter-spacing: 0.94px;">2.906,91</div>
<div class="c" style="left: 1489px; top: 492px; width: 35px; letter-spacing: 0.89px;">Objekt</div>
<div class="c" style="left: 1648px; top: 492px; width: 65px; letter-spacing: 0.83px;">Niedrig</div>
<div class="c" style="left: 22px; top: 509px; width: 168px; letter-spacing: 0.21px;">ARA-0</div>
<svg class="a" style="left:565px;top:509px" width="16" height="16"><rect x="0.5" y="0.5" width="15" height="15" rx="3" fill="#fff" opacity="0.85"></rect><rect x="1" y="1" width="14" height="14" rx="2" fill="url(#gr)"></rect><path d="M4 3.8 L12 11.8 M12 3.8 L4 11.8" stroke="#fff" stroke-width="1.25"></path></svg>
<svg class="a" style="left:676px;top:509px" width="16" height="16"><rect x="0.5" y="0.5" width="15" height="15" rx="3" fill="#fff" opacity="0.85"></rect><rect x="1" y="1" width="14" height="14" rx="2" fill="url(#gr)"></rect><path d="M4 3.8 L12 11.8 M12 3.8 L4 11.8" stroke="#fff" stroke-width="1.25"></path></svg>
<svg class="a" style="left:792px;top:509px" width="16" height="16"><rect x="0.5" y="0.5" width="15" height="15" rx="3" fill="#fff" opacity="0.85"></rect><rect x="1" y="1" width="14" height="14" rx="2" fill="url(#gr)"></rect><path d="M4 3.8 L12 11.8 M12 3.8 L4 11.8" stroke="#fff" stroke-width="1.25"></path></svg>
<div class="c" style="left: 866px; top: 509px; width: 34px; letter-spacing: 1.08px;">1999</div>
<div class="c r" style="left: 901px; top: 509px; width: 130px; letter-spacing: 1.08px;">1</div>
<div class="c" style="left: 1037px; top: 509px; width: 108px; letter-spacing: 0.94px;">Instandhaltung</div>
<div class="c" style="left: 1150px; top: 509px; width: 175px; letter-spacing: 0.8px;">Sickerschacht erneuern ostseitig</div>
<div class="c" style="left: 1330px; top: 509px; width: 64px; letter-spacing: 0.9px;">Abgerechnet</div>
<div class="c r" style="left: 1397px; top: 509px; width: 86px; letter-spacing: 0.94px;">2.180,18</div>
<div class="c" style="left: 1489px; top: 509px; width: 35px; letter-spacing: 0.89px;">Objekt</div>
<div class="c" style="left: 1648px; top: 509px; width: 65px; letter-spacing: 0.83px;">Niedrig</div>
<div class="c r" style="left: 1716px; top: 509px; width: 59px; letter-spacing: 0.94px;">0,00</div>
<div class="c" style="left: 1781px; top: 509px; width: 105px; letter-spacing: 0.97px;">31.12.1999</div>
<div class="c" style="left: 22px; top: 526px; width: 168px; letter-spacing: 0.53px;">AR-108</div>
<svg class="a" style="left:565px;top:526px" width="16" height="16"><rect x="0.5" y="0.5" width="15" height="15" rx="3" fill="#fff" opacity="0.85"></rect><rect x="1" y="1" width="14" height="14" rx="2" fill="url(#gr)"></rect><path d="M4 3.8 L12 11.8 M12 3.8 L4 11.8" stroke="#fff" stroke-width="1.25"></path></svg>
<svg class="a" style="left:676px;top:526px" width="16" height="16"><rect x="0.5" y="0.5" width="15" height="15" rx="3" fill="#fff" opacity="0.85"></rect><rect x="1" y="1" width="14" height="14" rx="2" fill="url(#gr)"></rect><path d="M4 3.8 L12 11.8 M12 3.8 L4 11.8" stroke="#fff" stroke-width="1.25"></path></svg>
<svg class="a" style="left:792px;top:526px" width="16" height="16"><rect x="0.5" y="0.5" width="15" height="15" rx="3" fill="#fff" opacity="0.85"></rect><rect x="1" y="1" width="14" height="14" rx="2" fill="url(#gg)"></rect><path d="M3.6 9 L6.4 11.8 L12.6 5.4" stroke="#fff" stroke-width="1.3" fill="none"></path></svg>
<div class="c" style="left: 866px; top: 526px; width: 34px; letter-spacing: 1.08px;">2019</div>
<div class="c r" style="left: 901px; top: 526px; width: 130px; letter-spacing: 1.08px;">7</div>
<div class="c" style="left: 1037px; top: 526px; width: 108px; letter-spacing: 0.85px;">Wohnungssanierung</div>
<div class="c" style="left: 1150px; top: 526px; width: 175px; letter-spacing: 0.7px;">Wohnsan Top 06</div>
<div class="c" style="left: 1330px; top: 526px; width: 64px; letter-spacing: 0.94px;">abgerechnet</div>
<div class="c r" style="left: 1397px; top: 526px; width: 86px; letter-spacing: 0.96px;">13.902,28</div>
<div class="c" style="left: 1489px; top: 526px; width: 35px; letter-spacing: 0.78px;">Einheit</div>
<div class="c" style="left: 1648px; top: 526px; width: 65px; letter-spacing: 0.95px;">Mittel</div>
<div class="c r" style="left: 1716px; top: 526px; width: 59px; letter-spacing: 0.94px;">1.390,23</div>
<div class="c" style="left: 1781px; top: 526px; width: 105px; letter-spacing: 0.97px;">16.10.2019</div>
<div class="c" style="left: 22px; top: 543px; width: 168px; letter-spacing: 0.53px;">AR-034</div>
<svg class="a" style="left:565px;top:543px" width="16" height="16"><rect x="0.5" y="0.5" width="15" height="15" rx="3" fill="#fff" opacity="0.85"></rect><rect x="1" y="1" width="14" height="14" rx="2" fill="url(#gr)"></rect><path d="M4 3.8 L12 11.8 M12 3.8 L4 11.8" stroke="#fff" stroke-width="1.25"></path></svg>
<svg class="a" style="left:676px;top:543px" width="16" height="16"><rect x="0.5" y="0.5" width="15" height="15" rx="3" fill="#fff" opacity="0.85"></rect><rect x="1" y="1" width="14" height="14" rx="2" fill="url(#gr)"></rect><path d="M4 3.8 L12 11.8 M12 3.8 L4 11.8" stroke="#fff" stroke-width="1.25"></path></svg>
<svg class="a" style="left:792px;top:543px" width="16" height="16"><rect x="0.5" y="0.5" width="15" height="15" rx="3" fill="#fff" opacity="0.85"></rect><rect x="1" y="1" width="14" height="14" rx="2" fill="url(#gr)"></rect><path d="M4 3.8 L12 11.8 M12 3.8 L4 11.8" stroke="#fff" stroke-width="1.25"></path></svg>
<div class="c" style="left: 866px; top: 543px; width: 34px; letter-spacing: 1.08px;">2012</div>
<div class="c" style="left: 1037px; top: 543px; width: 108px; letter-spacing: 0.94px;">Instandhaltung</div>
<div class="c" style="left: 1150px; top: 543px; width: 175px; letter-spacing: 0.77px;">Fensteranstrich</div>
<div class="c" style="left: 1330px; top: 543px; width: 64px; letter-spacing: 0.94px;">abgerechnet</div>
<div class="c r" style="left: 1397px; top: 543px; width: 86px; letter-spacing: 0.94px;">5.000,00</div>
<div class="c" style="left: 1489px; top: 543px; width: 35px; letter-spacing: 0.89px;">Objekt</div>
<div class="c" style="left: 1648px; top: 543px; width: 65px; letter-spacing: 0.95px;">Mittel</div>
<div class="c r" style="left: 1716px; top: 543px; width: 59px; letter-spacing: 0.94px;">0,00</div>
<div class="c" style="left: 1781px; top: 543px; width: 105px; letter-spacing: 1.07px;">11.12.2012</div>
<div class="c" style="left: 22px; top: 560px; width: 168px; letter-spacing: 0.21px;">ARA-0</div>
<svg class="a" style="left:565px;top:560px" width="16" height="16"><rect x="0.5" y="0.5" width="15" height="15" rx="3" fill="#fff" opacity="0.85"></rect><rect x="1" y="1" width="14" height="14" rx="2" fill="url(#gr)"></rect><path d="M4 3.8 L12 11.8 M12 3.8 L4 11.8" stroke="#fff" stroke-width="1.25"></path></svg>
<svg class="a" style="left:676px;top:560px" width="16" height="16"><rect x="0.5" y="0.5" width="15" height="15" rx="3" fill="#fff" opacity="0.85"></rect><rect x="1" y="1" width="14" height="14" rx="2" fill="url(#gr)"></rect><path d="M4 3.8 L12 11.8 M12 3.8 L4 11.8" stroke="#fff" stroke-width="1.25"></path></svg>
<svg class="a" style="left:792px;top:560px" width="16" height="16"><rect x="0.5" y="0.5" width="15" height="15" rx="3" fill="#fff" opacity="0.85"></rect><rect x="1" y="1" width="14" height="14" rx="2" fill="url(#gr)"></rect><path d="M4 3.8 L12 11.8 M12 3.8 L4 11.8" stroke="#fff" stroke-width="1.25"></path></svg>
<div class="c" style="left: 866px; top: 560px; width: 34px; letter-spacing: 1.08px;">2001</div>
<div class="c r" style="left: 901px; top: 560px; width: 130px; letter-spacing: 1.08px;">1</div>
<div class="c" style="left: 1037px; top: 560px; width: 108px; letter-spacing: 0.94px;">Instandhaltung</div>
<div class="c" style="left: 1150px; top: 560px; width: 175px; letter-spacing: 0.85px;">Erneuerung Hauptkanal</div>
<div class="c" style="left: 1330px; top: 560px; width: 64px; letter-spacing: 0.9px;">Abgerechnet</div>
<div class="c r" style="left: 1397px; top: 560px; width: 86px; letter-spacing: 0.94px;">4.360,37</div>
<div class="c" style="left: 1489px; top: 560px; width: 35px; letter-spacing: 0.89px;">Objekt</div>
<div class="c" style="left: 1648px; top: 560px; width: 65px; letter-spacing: 0.83px;">Niedrig</div>
<div class="c r" style="left: 1716px; top: 560px; width: 59px; letter-spacing: 0.94px;">0,00</div>
<div class="c" style="left: 1781px; top: 560px; width: 105px; letter-spacing: 0.97px;">31.12.2001</div>
<div class="c" style="left: 22px; top: 577px; width: 168px; letter-spacing: 0.21px;">ARA-0</div>
<svg class="a" style="left:565px;top:577px" width="16" height="16"><rect x="0.5" y="0.5" width="15" height="15" rx="3" fill="#fff" opacity="0.85"></rect><rect x="1" y="1" width="14" height="14" rx="2" fill="url(#gg)"></rect><path d="M3.6 9 L6.4 11.8 L12.6 5.4" stroke="#fff" stroke-width="1.3" fill="none"></path></svg>
<svg class="a" style="left:676px;top:577px" width="16" height="16"><rect x="0.5" y="0.5" width="15" height="15" rx="3" fill="#fff" opacity="0.85"></rect><rect x="1" y="1" width="14" height="14" rx="2" fill="url(#gr)"></rect><path d="M4 3.8 L12 11.8 M12 3.8 L4 11.8" stroke="#fff" stroke-width="1.25"></path></svg>
<svg class="a" style="left:792px;top:577px" width="16" height="16"><rect x="0.5" y="0.5" width="15" height="15" rx="3" fill="#fff" opacity="0.85"></rect><rect x="1" y="1" width="14" height="14" rx="2" fill="url(#gr)"></rect><path d="M4 3.8 L12 11.8 M12 3.8 L4 11.8" stroke="#fff" stroke-width="1.25"></path></svg>
<div class="c" style="left: 866px; top: 577px; width: 34px; letter-spacing: 1.08px;">2001</div>
<div class="c r" style="left: 901px; top: 577px; width: 130px; letter-spacing: 1.08px;">1</div>
<div class="c" style="left: 1037px; top: 577px; width: 108px; letter-spacing: 0.85px;">Wohnungssanierung</div>
<div class="c" style="left: 1150px; top: 577px; width: 175px; letter-spacing: 0.72px;">Sanierung Haus 12 Top 3</div>
<div class="c" style="left: 1330px; top: 577px; width: 64px; letter-spacing: 0.9px;">Abgerechnet</div>
<div class="c r" style="left: 1397px; top: 577px; width: 86px; letter-spacing: 1.06px;">17.211,53</div>
<div class="c" style="left: 1489px; top: 577px; width: 35px; letter-spacing: 0.89px;">Objekt</div>
<div class="c" style="left: 1648px; top: 577px; width: 65px; letter-spacing: 0.93px;">Unbekannt</div>
<div class="c r" style="left: 1716px; top: 577px; width: 59px; letter-spacing: 0.94px;">1.376,92</div>
<div class="c" style="left: 1781px; top: 577px; width: 105px; letter-spacing: 0.97px;">07.03.2002</div>
<div class="c" style="left: 1889px; top: 577px; width: 39px; letter-spacing: 0.97px;">24.02.2001</div>
<div class="c" style="left: 22px; top: 594px; width: 168px; letter-spacing: 0.21px;">ARA-0</div>
<svg class="a" style="left:565px;top:594px" width="16" height="16"><rect x="0.5" y="0.5" width="15" height="15" rx="3" fill="#fff" opacity="0.85"></rect><rect x="1" y="1" width="14" height="14" rx="2" fill="url(#gr)"></rect><path d="M4 3.8 L12 11.8 M12 3.8 L4 11.8" stroke="#fff" stroke-width="1.25"></path></svg>
<svg class="a" style="left:676px;top:594px" width="16" height="16"><rect x="0.5" y="0.5" width="15" height="15" rx="3" fill="#fff" opacity="0.85"></rect><rect x="1" y="1" width="14" height="14" rx="2" fill="url(#gr)"></rect><path d="M4 3.8 L12 11.8 M12 3.8 L4 11.8" stroke="#fff" stroke-width="1.25"></path></svg>
<svg class="a" style="left:792px;top:594px" width="16" height="16"><rect x="0.5" y="0.5" width="15" height="15" rx="3" fill="#fff" opacity="0.85"></rect><rect x="1" y="1" width="14" height="14" rx="2" fill="url(#gr)"></rect><path d="M4 3.8 L12 11.8 M12 3.8 L4 11.8" stroke="#fff" stroke-width="1.25"></path></svg>
<div class="c" style="left: 866px; top: 594px; width: 34px; letter-spacing: 1.08px;">2001</div>
<div class="c r" style="left: 901px; top: 594px; width: 130px; letter-spacing: 1.08px;">1</div>
<div class="c" style="left: 1037px; top: 594px; width: 108px; letter-spacing: 0.94px;">Instandhaltung</div>
<div class="c" style="left: 1150px; top: 594px; width: 175px; letter-spacing: 0.8px;">Erneuerung Hauptwasseranschluss</div>
<div class="c" style="left: 1330px; top: 594px; width: 64px; letter-spacing: 0.9px;">Abgerechnet</div>
<div class="c r" style="left: 1397px; top: 594px; width: 86px; letter-spacing: 0.94px;">1.998,50</div>
<div class="c" style="left: 1489px; top: 594px; width: 35px; letter-spacing: 0.89px;">Objekt</div>
<div class="c" style="left: 1648px; top: 594px; width: 65px; letter-spacing: 0.83px;">Niedrig</div>
<div class="c r" style="left: 1716px; top: 594px; width: 59px; letter-spacing: 0.94px;">0,00</div>
<div class="c" style="left: 1781px; top: 594px; width: 105px; letter-spacing: 0.97px;">31.12.2001</div>
<div class="c" style="left: 22px; top: 611px; width: 168px; letter-spacing: 0.21px;">ARA-0</div>
<svg class="a" style="left:565px;top:611px" width="16" height="16"><rect x="0.5" y="0.5" width="15" height="15" rx="3" fill="#fff" opacity="0.85"></rect><rect x="1" y="1" width="14" height="14" rx="2" fill="url(#gg)"></rect><path d="M3.6 9 L6.4 11.8 L12.6 5.4" stroke="#fff" stroke-width="1.3" fill="none"></path></svg>
<svg class="a" style="left:676px;top:611px" width="16" height="16"><rect x="0.5" y="0.5" width="15" height="15" rx="3" fill="#fff" opacity="0.85"></rect><rect x="1" y="1" width="14" height="14" rx="2" fill="url(#gr)"></rect><path d="M4 3.8 L12 11.8 M12 3.8 L4 11.8" stroke="#fff" stroke-width="1.25"></path></svg>
<svg class="a" style="left:792px;top:611px" width="16" height="16"><rect x="0.5" y="0.5" width="15" height="15" rx="3" fill="#fff" opacity="0.85"></rect><rect x="1" y="1" width="14" height="14" rx="2" fill="url(#gr)"></rect><path d="M4 3.8 L12 11.8 M12 3.8 L4 11.8" stroke="#fff" stroke-width="1.25"></path></svg>
<div class="c" style="left: 866px; top: 611px; width: 34px; letter-spacing: 1.08px;">2001</div>
<div class="c r" style="left: 901px; top: 611px; width: 130px; letter-spacing: 1.08px;">1</div>
<div class="c" style="left: 1037px; top: 611px; width: 108px; letter-spacing: 0.94px;">Instandhaltung</div>
<div class="c" style="left: 1150px; top: 611px; width: 175px; letter-spacing: 0.74px;">Anschluß Fernwärme</div>
<div class="c" style="left: 1330px; top: 611px; width: 64px; letter-spacing: 0.9px;">Abgerechnet</div>
<div class="c r" style="left: 1397px; top: 611px; width: 86px; letter-spacing: 0.94px;">4.651,06</div>
<div class="c" style="left: 1489px; top: 611px; width: 35px; letter-spacing: 0.89px;">Objekt</div>
<div class="c" style="left: 1648px; top: 611px; width: 65px; letter-spacing: 0.83px;">Niedrig</div>
<div class="c r" style="left: 1716px; top: 611px; width: 59px; letter-spacing: 0.94px;">0,00</div>
<div class="c" style="left: 1781px; top: 611px; width: 105px; letter-spacing: 0.97px;">31.12.2001</div>
<div class="c" style="left: 1889px; top: 611px; width: 39px; letter-spacing: 0.97px;">18.03.2001</div>
<div class="c" style="left: 22px; top: 628px; width: 168px; letter-spacing: 0.53px;">AR-048</div>
<svg class="a" style="left:565px;top:628px" width="16" height="16"><rect x="0.5" y="0.5" width="15" height="15" rx="3" fill="#fff" opacity="0.85"></rect><rect x="1" y="1" width="14" height="14" rx="2" fill="url(#gr)"></rect><path d="M4 3.8 L12 11.8 M12 3.8 L4 11.8" stroke="#fff" stroke-width="1.25"></path></svg>
<svg class="a" style="left:676px;top:628px" width="16" height="16"><rect x="0.5" y="0.5" width="15" height="15" rx="3" fill="#fff" opacity="0.85"></rect><rect x="1" y="1" width="14" height="14" rx="2" fill="url(#gr)"></rect><path d="M4 3.8 L12 11.8 M12 3.8 L4 11.8" stroke="#fff" stroke-width="1.25"></path></svg>
<svg class="a" style="left:792px;top:628px" width="16" height="16"><rect x="0.5" y="0.5" width="15" height="15" rx="3" fill="#fff" opacity="0.85"></rect><rect x="1" y="1" width="14" height="14" rx="2" fill="url(#gg)"></rect><path d="M3.6 9 L6.4 11.8 L12.6 5.4" stroke="#fff" stroke-width="1.3" fill="none"></path></svg>
<div class="c" style="left: 866px; top: 628px; width: 34px; letter-spacing: 1.08px;">2013</div>
<div class="c r" style="left: 901px; top: 628px; width: 130px; letter-spacing: 1.08px;">3</div>
<div class="c" style="left: 1037px; top: 628px; width: 108px; letter-spacing: 0.94px;">Instandhaltung</div>
<div class="c" style="left: 1150px; top: 628px; width: 175px; letter-spacing: 0.66px;">Boiler Top 1</div>
<div class="c" style="left: 1330px; top: 628px; width: 64px; letter-spacing: 0.94px;">abgerechnet</div>
<div class="c r" style="left: 1397px; top: 628px; width: 86px; letter-spacing: 0.99px;">582,67</div>
<div class="c" style="left: 1489px; top: 628px; width: 35px; letter-spacing: 0.78px;">Einheit</div>
<div class="c r" style="left: 1716px; top: 628px; width: 59px; letter-spacing: 0.94px;">0,00</div>
<div class="c" style="left: 1781px; top: 628px; width: 105px; letter-spacing: 0.97px;">16.06.2016</div>
<div class="c" style="left: 22px; top: 645px; width: 168px; letter-spacing: 0.53px;">AR-077</div>
<svg class="a" style="left:565px;top:645px" width="16" height="16"><rect x="0.5" y="0.5" width="15" height="15" rx="3" fill="#fff" opacity="0.85"></rect><rect x="1" y="1" width="14" height="14" rx="2" fill="url(#gr)"></rect><path d="M4 3.8 L12 11.8 M12 3.8 L4 11.8" stroke="#fff" stroke-width="1.25"></path></svg>
<svg class="a" style="left:676px;top:645px" width="16" height="16"><rect x="0.5" y="0.5" width="15" height="15" rx="3" fill="#fff" opacity="0.85"></rect><rect x="1" y="1" width="14" height="14" rx="2" fill="url(#gr)"></rect><path d="M4 3.8 L12 11.8 M12 3.8 L4 11.8" stroke="#fff" stroke-width="1.25"></path></svg>
<svg class="a" style="left:792px;top:645px" width="16" height="16"><rect x="0.5" y="0.5" width="15" height="15" rx="3" fill="#fff" opacity="0.85"></rect><rect x="1" y="1" width="14" height="14" rx="2" fill="url(#gg)"></rect><path d="M3.6 9 L6.4 11.8 L12.6 5.4" stroke="#fff" stroke-width="1.3" fill="none"></path></svg>
<div class="c" style="left: 866px; top: 645px; width: 34px; letter-spacing: 1.08px;">2018</div>
<div class="c r" style="left: 901px; top: 645px; width: 130px; letter-spacing: 1.08px;">9</div>
<div class="c" style="left: 1037px; top: 645px; width: 108px; letter-spacing: 0.85px;">Wohnungssanierung</div>
<div class="c" style="left: 1150px; top: 645px; width: 175px; letter-spacing: 0.72px;">Sanierung Top 4</div>
<div class="c" style="left: 1330px; top: 645px; width: 64px; letter-spacing: 0.94px;">abgerechnet</div>
<div class="c r" style="left: 1397px; top: 645px; width: 86px; letter-spacing: 0.94px;">2.588,83</div>
<div class="c" style="left: 1489px; top: 645px; width: 35px; letter-spacing: 0.78px;">Einheit</div>
<div class="c r" style="left: 1716px; top: 645px; width: 59px; letter-spacing: 0.94px;">0,00</div>
<div class="c" style="left: 1781px; top: 645px; width: 105px; letter-spacing: 0.97px;">15.07.2019</div>
<div class="c" style="left: 22px; top: 662px; width: 168px; letter-spacing: 0.53px;">AR-014</div>
<svg class="a" style="left:565px;top:662px" width="16" height="16"><rect x="0.5" y="0.5" width="15" height="15" rx="3" fill="#fff" opacity="0.85"></rect><rect x="1" y="1" width="14" height="14" rx="2" fill="url(#gr)"></rect><path d="M4 3.8 L12 11.8 M12 3.8 L4 11.8" stroke="#fff" stroke-width="1.25"></path></svg>
<svg class="a" style="left:676px;top:662px" width="16" height="16"><rect x="0.5" y="0.5" width="15" height="15" rx="3" fill="#fff" opacity="0.85"></rect><rect x="1" y="1" width="14" height="14" rx="2" fill="url(#gr)"></rect><path d="M4 3.8 L12 11.8 M12 3.8 L4 11.8" stroke="#fff" stroke-width="1.25"></path></svg>
<svg class="a" style="left:792px;top:662px" width="16" height="16"><rect x="0.5" y="0.5" width="15" height="15" rx="3" fill="#fff" opacity="0.85"></rect><rect x="1" y="1" width="14" height="14" rx="2" fill="url(#gg)"></rect><path d="M3.6 9 L6.4 11.8 L12.6 5.4" stroke="#fff" stroke-width="1.3" fill="none"></path></svg>
<div class="c" style="left: 866px; top: 662px; width: 34px; letter-spacing: 1.08px;">2015</div>
<div class="c r" style="left: 901px; top: 662px; width: 130px; letter-spacing: 1.08px;">10</div>
<div class="c" style="left: 1037px; top: 662px; width: 108px; letter-spacing: 0.94px;">Instandhaltung</div>
<div class="c" style="left: 1150px; top: 662px; width: 175px; letter-spacing: 0.87px;">Stiegenhausrenovierung</div>
<div class="c" style="left: 1330px; top: 662px; width: 64px; letter-spacing: 0.94px;">abgerechnet</div>
<div class="c r" style="left: 1397px; top: 662px; width: 86px; letter-spacing: 0.94px;">8.093,32</div>
<div class="c" style="left: 1489px; top: 662px; width: 35px; letter-spacing: 0.89px;">Objekt</div>
<div class="c" style="left: 1648px; top: 662px; width: 65px; letter-spacing: 0.83px;">Niedrig</div>
<div class="c r" style="left: 1716px; top: 662px; width: 59px; letter-spacing: 0.94px;">0,00</div>
<div class="c" style="left: 1781px; top: 662px; width: 105px; letter-spacing: 0.97px;">16.06.2016</div>
<div class="c" style="left: 22px; top: 679px; width: 168px; letter-spacing: 0.53px;">AR-020</div>
<svg class="a" style="left:565px;top:679px" width="16" height="16"><rect x="0.5" y="0.5" width="15" height="15" rx="3" fill="#fff" opacity="0.85"></rect><rect x="1" y="1" width="14" height="14" rx="2" fill="url(#gg)"></rect><path d="M3.6 9 L6.4 11.8 L12.6 5.4" stroke="#fff" stroke-width="1.3" fill="none"></path></svg>
<svg class="a" style="left:676px;top:679px" width="16" height="16"><rect x="0.5" y="0.5" width="15" height="15" rx="3" fill="#fff" opacity="0.85"></rect><rect x="1" y="1" width="14" height="14" rx="2" fill="url(#gr)"></rect><path d="M4 3.8 L12 11.8 M12 3.8 L4 11.8" stroke="#fff" stroke-width="1.25"></path></svg>
<svg class="a" style="left:792px;top:679px" width="16" height="16"><rect x="0.5" y="0.5" width="15" height="15" rx="3" fill="#fff" opacity="0.85"></rect><rect x="1" y="1" width="14" height="14" rx="2" fill="url(#gg)"></rect><path d="M3.6 9 L6.4 11.8 L12.6 5.4" stroke="#fff" stroke-width="1.3" fill="none"></path></svg>
<div class="c" style="left: 866px; top: 679px; width: 34px; letter-spacing: 1.08px;">2009</div>
<div class="c r" style="left: 901px; top: 679px; width: 130px; letter-spacing: 1.08px;">5</div>
<div class="c" style="left: 1037px; top: 679px; width: 108px; letter-spacing: 0.85px;">Wohnungssanierung</div>
<div class="c" style="left: 1150px; top: 679px; width: 175px; letter-spacing: 0.72px;">Sanierung Haus 12, Top 2</div>
<div class="c" style="left: 1330px; top: 679px; width: 64px; letter-spacing: 0.94px;">abgerechnet</div>
<div class="c r" style="left: 1397px; top: 679px; width: 86px; letter-spacing: 0.96px;">22.217,37</div>
<div class="c" style="left: 1489px; top: 679px; width: 35px; letter-spacing: 0.78px;">Einheit</div>
<div class="c" style="left: 1648px; top: 679px; width: 65px; letter-spacing: 0.83px;">Niedrig</div>
<div class="c r" style="left: 1716px; top: 679px; width: 59px; letter-spacing: 1.06px;">2.110,65</div>
<div class="c" style="left: 1781px; top: 679px; width: 105px; letter-spacing: 0.97px;">31.12.2009</div>
<div class="c" style="left: 1889px; top: 679px; width: 39px; letter-spacing: 0.97px;">19.01.2009</div>
<svg class="a" style="left:11px;top:342px" width="7" height="11"><path d="M0.5 0.5 L6 5.5 L0.5 10.5 Z" fill="#000"></path></svg>
<div class="a" style="left:20px;top:339px;width:170px;height:17px;border:1px dotted #333"></div>
<div class="a" style="left:60px;top:339px;width:37px;height:357px;background:#fff"></div>
<div class="a" style="left:1543px;top:335px;width:104px;height:358px;background:#fff"></div>
<div class="a" style="left:1928px;top:320px;width:17px;height:417px;background:#f0f0f0"></div>
<div class="a" style="left:1936px;top:337px;width:2px;height:397px;background:#707070"></div>
<div class="a" style="left:7px;top:319px;width:1939px;height:418px;border:1px solid #5a5a5a;border-bottom:none"></div>
<div class="a" style="left:4px;top:739px;width:1945px;height:1px;background:#d6d6d6"></div><div class="a" style="left:4px;top:740px;width:1945px;height:1px;background:#fff"></div>
<div class="a" style="left:4px;top:741px;width:1945px;height:17px;background:#efebea"></div>
<div class="a" style="left:6px;top:741px;width:1px;height:17px;background:#d6d3d1"></div>
<div class="a" style="left:209px;top:741px;width:1px;height:17px;background:#d6d3d1"></div>
<div class="a" style="left:412px;top:741px;width:1px;height:17px;background:#d6d3d1"></div>
<div class="a" style="left:615px;top:741px;width:1px;height:17px;background:#d6d3d1"></div>
<div class="a" style="left:918px;top:741px;width:1px;height:17px;background:#d6d3d1"></div>
<div class="t" style="left: 56px; top: 741px; letter-spacing: 0.86px;">Datensätze: 21</div>
<div class="t" style="left: 437px; top: 741px; letter-spacing: 0.83px;">Ausgeblendete Spalten</div>
<div class="t" style="left:634px;top:741px;letter-spacing:0.95px">Zuletzt aktualisiert: 01.10.2025 11:17:45</div>
<div class="btn" style="left:3px;top:762px;width:115px;height:21px"></div>
<div class="a" style="left:9px;top:765px;width:14px;height:14px;border-radius:2px;background:linear-gradient(135deg,#5b90e0,#2a62c8 60%,#2052b0)"><div class="a" style="left:2px;top:6px;width:10px;height:2px;background:#fff"></div><div class="a" style="left:6px;top:2px;width:2px;height:10px;background:#fff"></div></div>
<div class="t" style="left: 28px; top: 764px; letter-spacing: 0.76px;">Neu</div>
<div class="btn" style="left:121px;top:762px;width:115px;height:21px"></div>
<svg class="a" style="left:127px;top:765px" width="14" height="14"><defs><linearGradient id="gp" x1="0" y1="0" x2="1" y2="1"><stop offset="0" stop-color="#d27cf6"></stop><stop offset="0.5" stop-color="#a832e6"></stop><stop offset="1" stop-color="#8410c8"></stop></linearGradient></defs><rect width="14" height="14" rx="2" fill="url(#gp)"></rect><path d="M2.2 9.6 L7.6 4.6 L7.6 9.6 Z" fill="#fff"></path><path d="M7.2 11.8 L12.2 2.6" stroke="#000" stroke-width="3.4"></path><path d="M7.6 10.6 L11.8 3.2" stroke="#f8f000" stroke-width="1.6"></path><circle cx="12.2" cy="2.4" r="1.4" fill="#20a020"></circle></svg>
<div class="t" style="left: 146px; top: 764px; letter-spacing: 0.87px;">Detail</div>
<div class="btn" style="left:239px;top:762px;width:115px;height:21px"></div>
<div class="a" style="left:245px;top:765px;width:14px;height:14px;border-radius:2px;background:linear-gradient(135deg,#ff6060,#f02020 55%,#c81010)"><div class="a" style="left:2px;top:6px;width:10px;height:2px;background:#fff"></div></div>
<div class="t" style="left: 264px; top: 764px; letter-spacing: 0.65px;">Löschen</div>
<div class="btn" style="left:357px;top:762px;width:115px;height:21px"></div>
<svg class="a" style="left:363px;top:765px" width="14" height="14"><defs><linearGradient id="go" x1="0" y1="0" x2="1" y2="1"><stop offset="0" stop-color="#ffa040"></stop><stop offset="0.5" stop-color="#f08010"></stop><stop offset="1" stop-color="#b85800"></stop></linearGradient></defs><rect width="14" height="14" rx="2" fill="url(#go)"></rect><path d="M4 6 V4 H9.5 V2.8 L12 5.6 L9.5 8.4 V6.8 H6 V6 Z" fill="#fff"></path><path d="M10 8 V10 H4.5 V11.2 L2 8.4 L4.5 5.6 V7.2 H8 V8 Z" fill="#fff"></path></svg>
<div class="t" style="left: 382px; top: 764px; letter-spacing: 0.82px;">Aktualisieren</div>
<div class="btn" style="left:475px;top:762px;width:115px;height:21px"></div>
<svg class="a" style="left:482px;top:768px" width="10" height="7"><path d="M0 0.5 L10 0.5 L5 5.5 Z" fill="#3848d8"></path></svg>
<div class="t" style="left: 498px; top: 764px; letter-spacing: 0.9px;">Navigation</div>
<div class="btn" style="left:593px;top:762px;width:115px;height:21px"></div>
<svg class="a" style="left:600px;top:768px" width="10" height="7"><path d="M0 0.5 L10 0.5 L5 5.5 Z" fill="#3848d8"></path></svg>
<div class="t" style="left: 616px; top: 764px; letter-spacing: 0.91px;">Aktionen</div>
<div class="btn" style="left:711px;top:762px;width:115px;height:21px"></div>
<svg class="a" style="left:718px;top:768px" width="10" height="7"><path d="M0 0.5 L10 0.5 L5 5.5 Z" fill="#3848d8"></path></svg>
<div class="t" style="left: 734px; top: 764px; letter-spacing: 0.87px;">Berichte</div>
<div class="btn" style="left:829px;top:762px;width:115px;height:21px"></div>
<svg class="a" style="left:833px;top:764px" width="17" height="17"><path d="M4.5 0.5 H12 L15.5 4 V14 H4.5 Z" fill="#f4f8ff" stroke="#6e8cd2"></path><rect x="6.5" y="2.5" width="4" height="2" fill="none" stroke="#6070b0"></rect><path d="M6 6.5 H11" stroke="#6070b0"></path><path d="M0.5 5 Q0.5 3.5 2 3.5 H4.5 V15.5 H0.5 Z" fill="#f2cc40" stroke="#c08a10"></path><path d="M0.5 15.5 L2 8.5 H15.5 L14.5 15.5 Z" fill="#f6d860" stroke="#c08a10"></path></svg>
<div class="t" style="left: 855px; top: 764px; letter-spacing: 1.02px;">Dokumente</div>
<div class="btn" style="left:1920px;top:762px;width:30px;height:21px"></div>
<svg class="a" style="left:1926px;top:764px" width="18" height="17"><path d="M3 3 L15 14 M15 3 L3 14" stroke="#5a1010" stroke-width="4.6" stroke-linecap="round"></path><path d="M3 3 L15 14 M15 3 L3 14" stroke="#f03838" stroke-width="3" stroke-linecap="round"></path></svg></body></html>
